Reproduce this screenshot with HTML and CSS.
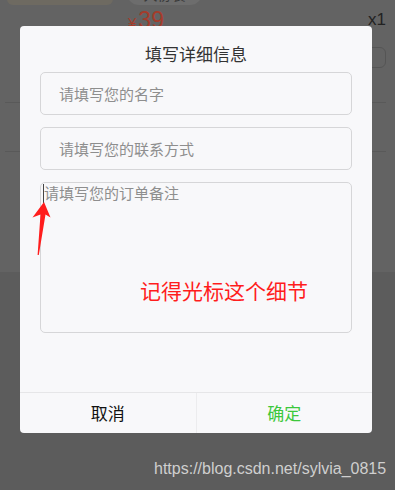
FILE: index.html
```html
<!DOCTYPE html>
<html lang="zh-CN">
<head>
    <meta charset="UTF-8">
    <meta name="viewport" content="width=device-width, initial-scale=1.0">
    <title>填写详细信息</title>
    <link rel="stylesheet" href="styles.css">
</head>
<body>
    <div class="page">
        <div class="goods">
            <div class="goods-top">
                <span class="shop-tag"></span>
                <span class="spec-tag">大份装</span>
            </div>
            <div class="goods-price">
                <span class="price"><small>¥</small>39</span>
                <span class="count">x1</span>
            </div>
            <div class="stepper-row"><span class="stepper"></span></div>
        </div>
        <div class="row"></div>
        <div class="spacer"></div>
        <div class="page-bottom"></div>
    </div>

    <div class="dialog">
        <div class="dialog-title">填写详细信息</div>
        <div class="dialog-body">
            <input type="text" class="field" placeholder="请填写您的名字">
            <input type="text" class="field" placeholder="请填写您的联系方式">
            <div class="remark">
                <textarea class="remark-input" placeholder="请填写您的订单备注"></textarea>
                <span class="caret"></span>
            </div>
        </div>
        <div class="dialog-footer">
            <div class="btn btn-cancel">取消</div>
            <div class="btn btn-ok">确定</div>
        </div>
    </div>

    <!-- annotation on the screenshot -->
    <svg class="arrow" width="24" height="58" viewBox="30 200 24 58">
        <polygon points="44,202 50.5,217.5 45.5,214.5 38.8,255 37.6,255 40.5,214.5 32.5,217.5" fill="#ff1d1d"/>
    </svg>
    <div class="note">记得光标这个细节</div>

    <div class="watermark">https://blog.csdn.net/sylvia_0815</div>
</body>
</html>
```

FILE: styles.css
```css
html, body {
    margin: 0;
    padding: 0;
}
body {
    width: 395px;
    height: 490px;
    overflow: hidden;
    position: relative;
    background-color: #636363;
    font-family: "Noto Sans CJK SC", "Liberation Sans", sans-serif;
}

/* page behind the mask */
.goods {
    height: 102px;
    margin: 0 9px 0 5px;
    border-bottom: 1px solid #595959;
}
.goods-top {
    display: flex;
    height: 5px;
}
.shop-tag {
    width: 106px;
    height: 24px;
    margin: -19px 0 0 2px;
    background-color: #6e6a61;
    border-radius: 6px;
}
.spec-tag {
    width: 75px;
    height: 24px;
    margin: -19px 0 0 14px;
    background-color: #6d6d6d;
    border-radius: 12px;
    color: #3a3a3a;
    font-size: 14px;
    line-height: 26px;
    text-align: center;
    overflow: hidden;
}
.goods-price {
    display: flex;
    justify-content: space-between;
    height: 30px;
    line-height: 30px;
    padding-left: 123px;
    font-family: "Liberation Sans", sans-serif;
}
.price {
    color: #a53c2b;
    font-size: 23px;
}
.price small {
    font-size: 15px;
    margin-right: 2px;
}
.count {
    color: #222;
    font-size: 17px;
}
.stepper-row {
    display: flex;
    justify-content: flex-end;
    margin-top: 12px;
}
.stepper {
    width: 80px;
    height: 19px;
    border: 1px solid #555;
    border-radius: 6px;
}
.row {
    height: 48px;
    margin: 0 9px 0 5px;
    border-bottom: 1px solid #595959;
}
.spacer {
    height: 120px;
}
.page-bottom {
    height: 218px;
    background-color: #5c5c5c;
}

/* dialog */
.dialog {
    position: absolute;
    left: 20px;
    top: 26px;
    width: 352px;
    background-color: #f8f8fa;
    border-radius: 4px;
    overflow: hidden;
}
.dialog-title {
    padding-top: 16px;
    height: 24px;
    line-height: 24px;
    margin-bottom: 6px;
    text-align: center;
    font-size: 17px;
    color: #333;
}
.dialog-body {
    display: flex;
    flex-direction: column;
    gap: 12px;
    padding: 0 20px;
}
.field {
    display: block;
    width: 100%;
    height: 43px;
    box-sizing: border-box;
    padding: 0 18px;
    border: 1px solid #d6d6d8;
    border-radius: 5px;
    background-color: #f8f8fa;
    font-family: inherit;
    font-size: 15px;
    outline: none;
}
.field::placeholder,
.remark-input::placeholder {
    color: #8e8e8e;
}
.remark {
    position: relative;
}
.remark-input {
    display: block;
    width: 100%;
    height: 151px;
    box-sizing: border-box;
    margin: 0;
    padding: 1px 2px 1px 3px;
    border: 1px solid #d6d6d8;
    border-radius: 5px;
    background-color: #f8f8fa;
    font-family: inherit;
    font-size: 15px;
    line-height: 18px;
    resize: none;
    outline: none;
}
.caret {
    position: absolute;
    left: 3px;
    top: 2px;
    width: 1px;
    height: 19px;
    background-color: #444;
}
.dialog-footer {
    display: flex;
    margin-top: 59px;
    border-top: 1px solid #e6e6e8;
}
.btn {
    flex: 1;
    height: 40px;
    line-height: 40px;
    text-align: center;
    font-size: 17px;
}
.btn-cancel {
    color: #111;
}
.btn-ok {
    color: #3cc83c;
    border-left: 1px solid #ececee;
}

/* annotations */
.arrow {
    position: absolute;
    left: 30px;
    top: 200px;
}
.note {
    position: absolute;
    left: 140px;
    top: 280px;
    font-size: 21px;
    line-height: 21px;
    color: #ff1d1d;
}
.watermark {
    position: absolute;
    left: 154px;
    top: 460px;
    font-family: "Liberation Sans", Arial, sans-serif;
    font-size: 16px;
    line-height: 18px;
    color: #cfcfcf;
}
```
